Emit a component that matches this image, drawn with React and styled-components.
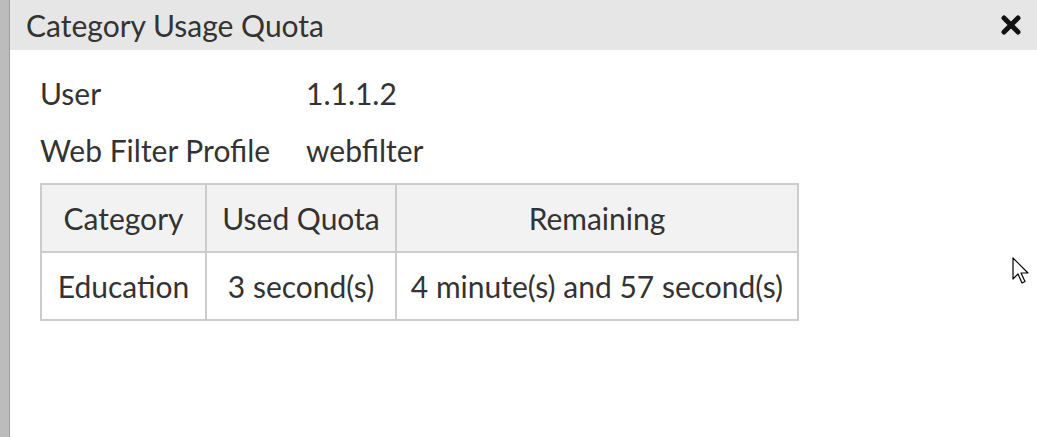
import React from "react";
import styled, { createGlobalStyle } from "styled-components";

const GlobalStyle = createGlobalStyle`
  html, body {
    margin: 0;
    padding: 0;
    overflow: hidden;
    background: #ffffff;
  }
  * { box-sizing: border-box; }
`;

const Screen = styled.div`
  display: flex;
  width: 1037px;
  height: 437px;
  font-family: Lato, "Noto Sans", sans-serif;
  color: #333333;
`;

const Backdrop = styled.div`
  width: 10px;
  flex-shrink: 0;
  background: #bcbcbc;
  border-right: 1px solid #9c9c9c;
`;

const Dialog = styled.div`
  flex: 1;
  display: flex;
  flex-direction: column;
  background: #ffffff;
  position: relative;
`;

const Header = styled.div`
  height: 50px;
  display: flex;
  align-items: center;
  justify-content: space-between;
  padding: 0 14px 0 16px;
  background: #e6e6e6;
`;

const Title = styled.h2`
  margin: 0;
  font-size: 30px;
  font-weight: 400;
  color: #333333;
`;

const CloseButton = styled.button`
  border: none;
  background: none;
  padding: 0;
  width: 24px;
  height: 24px;
  display: flex;
  align-items: center;
  justify-content: center;
  cursor: pointer;
`;

const Body = styled.div`
  padding: 25px 30px;
  display: flex;
  flex-direction: column;
`;

const Details = styled.div`
  display: grid;
  grid-template-columns: 233px auto;
  column-gap: 33px;
  row-gap: 21px;
  font-size: 30px;
  line-height: 36px;
  margin-bottom: 15px;
`;

const Label = styled.div`
  white-space: nowrap;
`;
const Value = styled.div``;

const Table = styled.table`
  border-collapse: collapse;
  font-size: 30px;
  line-height: 34px;
  width: 757px;
  table-layout: fixed;
`;

const Th = styled.th`
  font-weight: 400;
  background: #f2f2f2;
  border: 2px solid #cccccc;
  padding: 16px 8px;
  text-align: center;
  white-space: nowrap;
  width: ${(p) => p.$w}px;
`;

const Td = styled.td`
  border: 2px solid #cccccc;
  padding: 16px 8px;
  text-align: center;
  white-space: nowrap;
`;

const Pointer = styled.svg`
  position: absolute;
  left: 1002px;
  top: 257px;
`;

const rows = [
  { category: "Education", used: "3 second(s)", remaining: "4 minute(s) and 57 second(s)" },
];

export default function App() {
  return (
    <>
      <GlobalStyle />
      <Screen>
        <Backdrop />
        <Dialog>
          <Header>
            <Title>Category Usage Quota</Title>
            <CloseButton aria-label="Close">
              <svg width="22" height="22" viewBox="0 0 22 22">
                <path d="M4 4 L18 18 M18 4 L4 18" stroke="#111" strokeWidth="5" strokeLinecap="round" />
              </svg>
            </CloseButton>
          </Header>
          <Body>
            <Details>
              <Label>User</Label>
              <Value>1.1.1.2</Value>
              <Label>Web Filter Profile</Label>
              <Value>webfilter</Value>
            </Details>
            <Table>
              <thead>
                <tr>
                  <Th $w={165}>Category</Th>
                  <Th $w={190}>Used Quota</Th>
                  <Th $w={402}>Remaining</Th>
                </tr>
              </thead>
              <tbody>
                {rows.map((r) => (
                  <tr key={r.category}>
                    <Td>{r.category}</Td>
                    <Td>{r.used}</Td>
                    <Td>{r.remaining}</Td>
                  </tr>
                ))}
              </tbody>
            </Table>
          </Body>
          <Pointer width="20" height="30" viewBox="0 0 20 30">
            <path d="M1 1 L1 22 L6 17 L10 26 L13 24.5 L9 16 L16 16 Z" fill="#fff" stroke="#000" strokeWidth="1.2" strokeLinejoin="round" />
          </Pointer>
        </Dialog>
      </Screen>
    </>
  );
}
